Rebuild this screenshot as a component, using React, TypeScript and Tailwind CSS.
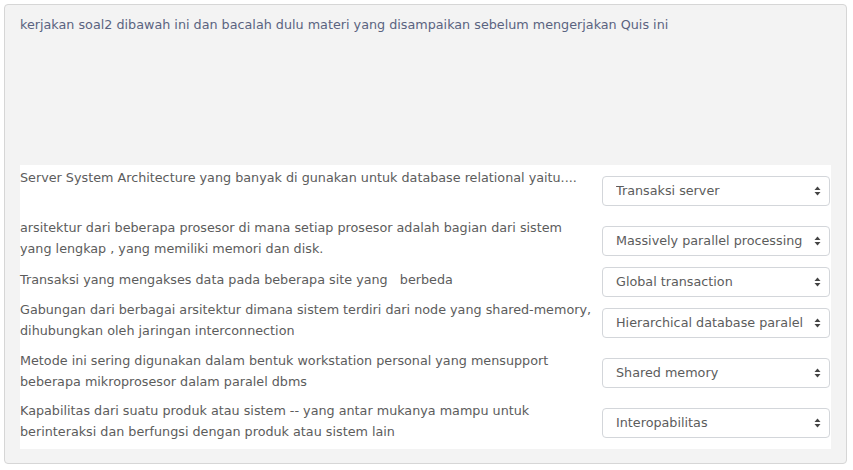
import React from "react";

type Row = {
	lines: string[];
	answer: string;
	rowH: string;
	selMt: string;
};

const rows: Row[] = [
	{
		lines: ["Server System Architecture yang banyak di gunakan untuk database relational yaitu...."],
		answer: "Transaksi server",
		rowH: "h-[50px]",
		selMt: "mt-[11px]",
	},
	{
		lines: [
			"arsitektur dari beberapa prosesor di mana setiap prosesor adalah bagian dari sistem",
			"yang lengkap , yang memiliki memori dan disk.",
		],
		answer: "Massively parallel processing",
		rowH: "h-[52px]",
		selMt: "mt-[11px]",
	},
	{
		lines: ["Transaksi yang mengakses data pada beberapa site yang \u00a0 berbeda"],
		answer: "Global transaction",
		rowH: "h-[30px]",
		selMt: "mt-0",
	},
	{
		lines: [
			"Gabungan dari berbagai arsitektur dimana sistem terdiri dari node yang shared-memory,",
			"dihubungkan oleh jaringan interconnection",
		],
		answer: "Hierarchical database paralel",
		rowH: "h-[51px]",
		selMt: "mt-[11px]",
	},
	{
		lines: [
			"Metode ini sering digunakan dalam bentuk workstation personal yang mensupport",
			"beberapa mikroprosesor dalam paralel dbms",
		],
		answer: "Shared memory",
		rowH: "h-[50px]",
		selMt: "mt-[10px]",
	},
	{
		lines: [
			"Kapabilitas dari suatu produk atau sistem -- yang antar mukanya mampu untuk",
			"berinteraksi dan berfungsi dengan produk atau sistem lain",
		],
		answer: "Interopabilitas",
		rowH: "h-[51px]",
		selMt: "mt-[10px]",
	},
];

const SortArrows = () => (
	<svg width="7" height="10" viewBox="0 0 7 10" className="pointer-events-none absolute right-[9px] top-[10px]">
		<path d="M3.5 0.5 L6.5 4 H0.5 Z" fill="#444" />
		<path d="M3.5 9.5 L6.5 6 H0.5 Z" fill="#444" />
	</svg>
);

export default function App() {
	return (
		<div className="min-h-[470px] w-[853px] bg-white pt-1 pl-1 font-['DejaVu_Sans',sans-serif] text-[12.75px]">
			<div className="w-[843px] h-[460px] bg-[#f3f3f3] border border-[#d6d6d6] rounded-[4px] px-[15px] pt-[9px]">
				{/* soal intro */}
				<p className="leading-[21px] text-[#5a6380] h-[151px]">
					kerjakan soal2 dibawah ini dan bacalah dulu materi yang disampaikan sebelum mengerjakan Quis ini
				</p>

				{/* tabel menjodohkan */}
				<div className="bg-white flex flex-col h-[284px]">
					{rows.map((r, i) => (
						<div key={i} className={`flex justify-between shrink-0 ${r.rowH}`}>
							<div className="leading-[21px] text-[#5c5c5c] whitespace-nowrap pt-[2px]">
								{r.lines.map((l, j) => (
									<div key={j}>{l}</div>
								))}
							</div>
							<div className={`relative w-[228px] h-[30px] mr-px ${r.selMt}`}>
								<select
									defaultValue={r.answer}
									className="block appearance-none w-full h-[30px] bg-white border border-[#d3d6da] rounded-[4px] pl-[13px] pr-5 text-[12.75px] text-[#5c5c5c] font-['DejaVu_Sans',sans-serif] outline-none"
								>
									<option>{r.answer}</option>
								</select>
								<SortArrows />
							</div>
						</div>
					))}
				</div>
			</div>
		</div>
	);
}
